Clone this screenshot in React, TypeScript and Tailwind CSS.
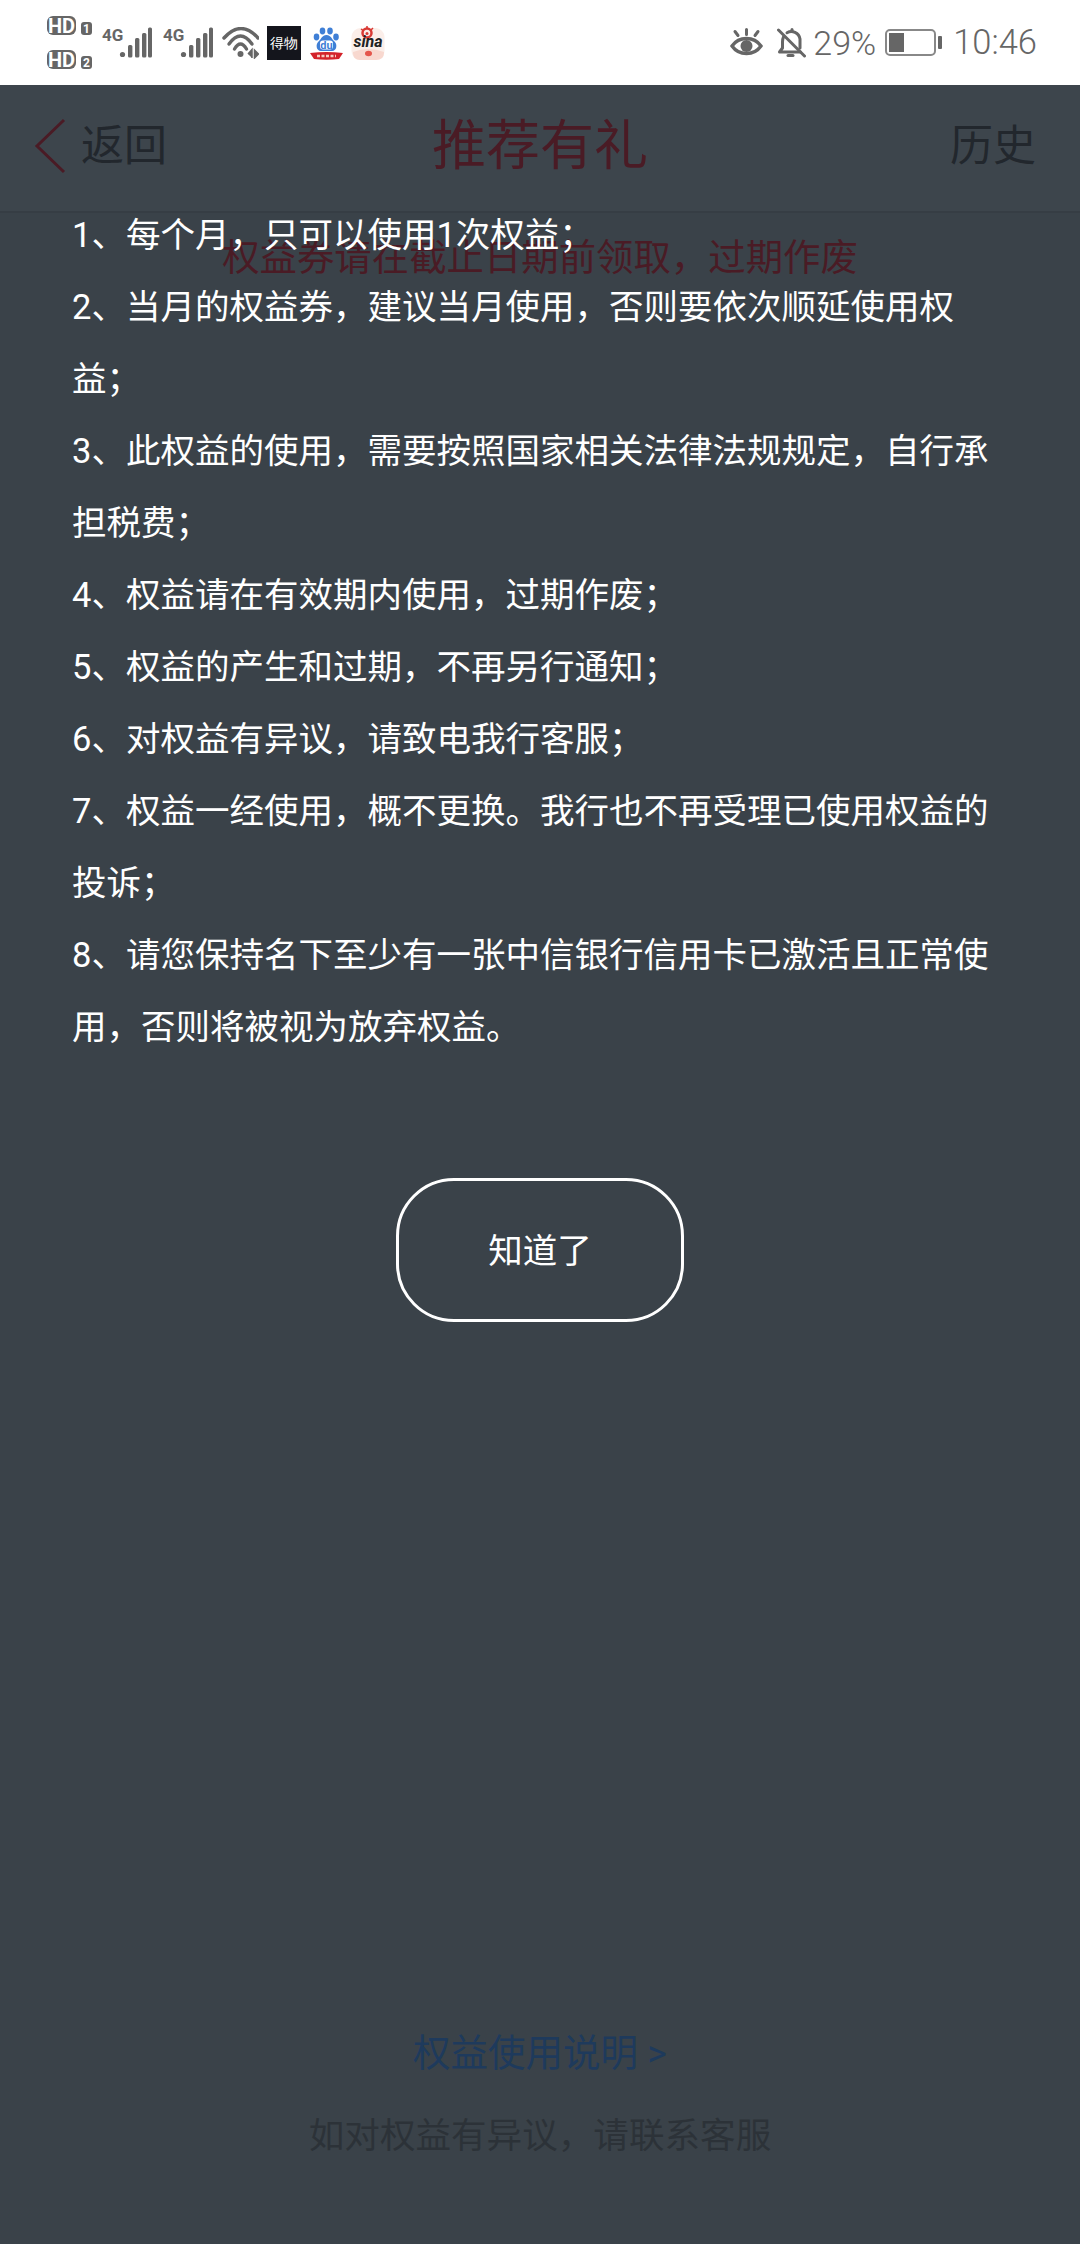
const cjk = "font-['Roboto','Noto_Sans_CJK_SC',sans-serif]";
const narrow = "font-['Liberation_Sans_Narrow','Roboto',sans-serif]";

const rules = [
  "1、每个月，只可以使用1次权益；",
  "2、当月的权益券，建议当月使用，否则要依次顺延使用权益；",
  "3、此权益的使用，需要按照国家相关法律法规规定，自行承担税费；",
  "4、权益请在有效期内使用，过期作废；",
  "5、权益的产生和过期，不再另行通知；",
  "6、对权益有异议，请致电我行客服；",
  "7、权益一经使用，概不更换。我行也不再受理已使用权益的投诉；",
  "8、请您保持名下至少有一张中信银行信用卡已激活且正常使用，否则将被视为放弃权益。",
];

function HdBadge({ n }: { n: number }) {
  return (
    <div className={`flex items-end gap-[5px] ${narrow}`}>
      <span className="flex h-[19px] w-[29px] items-center justify-center rounded-[6px] bg-[#666] text-[20px] leading-none font-bold text-white">
        HD
      </span>
      <span className="flex h-[13px] w-[11px] items-center justify-center rounded-[3px] bg-[#666] text-[12px] leading-none font-bold text-white">
        {n}
      </span>
    </div>
  );
}

function Signal() {
  return (
    <div className="relative h-[32px] w-[50px]">
      <span className={`absolute -top-[1px] left-0 text-[17px] leading-[18px] font-bold text-[#666] ${narrow}`}>4G</span>
      <svg className="absolute top-0 left-0" width="50" height="32" viewBox="0 0 50 32" fill="#666">
        <circle cx="20.500" cy="27.500" r="2.600" />
        <rect x="26" y="18" width="4.400" height="12.500" rx="1.500" />
        <rect x="33" y="11" width="4.400" height="19.500" rx="1.500" />
        <rect x="40" y="6" width="4.400" height="24.500" rx="1.500" />
        <rect x="46" y="0.500" width="4" height="30" rx="1.500" />
      </svg>
    </div>
  );
}

function Wifi() {
  return (
    <svg width="37" height="32" viewBox="0 0 37 32" fill="none" stroke="#666" strokeWidth="3.400" strokeLinecap="round">
      <path d="M2 11Q19 -8 36 11" />
      <path d="M7 17Q18.500 1 30 17" />
      <path d="M12.500 22Q18.500 12 24.500 22" />
      <circle cx="18.500" cy="27" r="3" fill="#666" stroke="none" />
      <path d="M26 27l4-4.500V31M32.500 23V31L36.500 27Z" fill="#666" strokeWidth="1.500" strokeLinecap="butt" />
    </svg>
  );
}

function Dewu() {
  return (
    <div className="flex h-[34px] w-[34px] items-center justify-center bg-[#14151c] text-[14px] leading-none font-light whitespace-nowrap text-white">
      得物
    </div>
  );
}

function Baidu() {
  return (
    <svg width="34" height="34" viewBox="0 0 34 34">
      <g fill="#3f7fd6">
        <ellipse cx="7.500" cy="11" rx="2.800" ry="3.400" />
        <ellipse cx="13.500" cy="5" rx="2.800" ry="3.400" />
        <ellipse cx="21" cy="5" rx="2.800" ry="3.400" />
        <ellipse cx="27" cy="11" rx="2.800" ry="3.400" />
        <path d="M17.500 9C13 9 12.500 13 9.500 15.500 6.500 18 7 25 12 25h11c5 0 5.500-7 2.500-9.500C22.500 13 22 9 17.500 9Z" />
      </g>
      <rect x="11" y="14.500" width="13" height="9" rx="3" fill="#fff" />
      <text x="17.500" y="22.500" textAnchor="middle" fontSize="11" fontWeight="700" fill="#3f7fd6" fontFamily="Roboto">
        du
      </text>
      <path d="M1 27Q17.500 25 34 27L30 33Q17.500 34.500 5 33Z" fill="#d3222a" />
      <path d="M8 30H27" stroke="#f6c9c0" strokeWidth="2.500" strokeDasharray="3 1.500" />
    </svg>
  );
}

function Sina() {
  return (
    <svg width="34" height="34" viewBox="0 0 34 34">
      <rect x="0.500" y="2" width="33" height="32" rx="9" fill="#fbeee9" />
      <path d="M2 26Q17 20 33 26V27Q33 34 25 34H9Q2 34 2 27Z" fill="#f8d8cf" />
      <circle cx="16" cy="7" r="4.500" fill="none" stroke="#d93a35" strokeWidth="2.500" />
      <circle cx="16" cy="7.500" r="1.500" fill="#d93a35" />
      <path d="M10 3l3 2M22 2l-3 3M16 0v3" stroke="#d93a35" strokeWidth="1.500" />
      <text x="17" y="21" textAnchor="middle" fontSize="16" fontWeight="700" fontStyle="italic" fill="#222" fontFamily="Roboto">
        sina
      </text>
      <ellipse cx="17.500" cy="27.500" rx="3.500" ry="2.800" fill="#e4564c" />
    </svg>
  );
}

function Eye() {
  return (
    <svg width="33" height="29" viewBox="0 0 33 29" fill="none" stroke="#666" strokeWidth="3.400" strokeLinecap="round">
      <path d="M2 18C9 8 24 8 31 18 24 28 9 28 2 18Z" />
      <circle cx="16.500" cy="18" r="6" fill="#666" stroke="none" />
      <path d="M16.500 1.500v5M5 3.500l3 4M28 3.500l-3 4" strokeWidth="3" />
    </svg>
  );
}

function BellOff() {
  return (
    <svg width="29" height="30" viewBox="0 0 29 30" fill="none" stroke="#666" strokeWidth="3" strokeLinecap="round" strokeLinejoin="round">
      <path d="M6.500 9C5.500 11 5.500 12 5.500 14v6L2.500 24h21" />
      <path d="M10 4.800C15 2 22 4.500 23 11v9" />
      <path d="M15 3V1.500" />
      <path d="M11 27.500h5" />
      <path d="M1.500 2l26 26" />
    </svg>
  );
}

function Battery() {
  return (
    <div className="flex items-center gap-[2px]">
      <div className="h-[27px] w-[51px] rounded-[5px] border-2 border-[#888] p-[2px]">
        <div className="h-full w-[15px] bg-[#666]" />
      </div>
      <div className="h-[13px] w-[4px] rounded-[1px] bg-[#666]" />
    </div>
  );
}

function StatusBar() {
  return (
    <div className="flex h-[85px] shrink-0 items-center justify-between bg-white pr-[43px] pl-[47px] font-['Roboto',sans-serif]">
      <div className="flex items-center">
        <div className="flex w-[55px] flex-col gap-[15px]">
          <HdBadge n={1} />
          <HdBadge n={2} />
        </div>
        <div className="flex items-center gap-[11px]">
          <Signal />
          <Signal />
        </div>
        <div className="ml-[9px] flex items-center gap-[8px]">
          <Wifi />
          <Dewu />
          <Baidu />
          <Sina />
        </div>
      </div>
      <div className="flex items-center text-[#666]">
        <Eye />
        <div className="ml-[14px]">
          <BellOff />
        </div>
        <span className="ml-[7px] text-[34px] leading-none font-light">29%</span>
        <div className="ml-[9px]">
          <Battery />
        </div>
        <span className="ml-[11px] text-[34.500px] leading-none font-light">10:46</span>
      </div>
    </div>
  );
}

function Header() {
  return (
    <div className="flex h-[128px] shrink-0 items-center border-b-2 border-[#363d44] bg-[#3d454c] px-[34px] pb-[4px]">
      <div className="flex flex-1 items-center gap-[15px]">
        <svg width="32" height="56" viewBox="0 0 32 56" fill="none" stroke="#4a1b25" strokeWidth="3">
          <path d="M30 2L3 28l27 26" />
        </svg>
        <span className="text-[43px] text-[#22272d]">返回</span>
      </div>
      <h1 className="text-[54px] font-normal text-[#4a1b25]">推荐有礼</h1>
      <div className="flex flex-1 justify-end">
        <span className="mr-[10px] text-[43px] text-[#22272d]">历史</span>
      </div>
    </div>
  );
}

export default function App() {
  return (
    <div className={`relative flex h-[2244px] w-[1080px] flex-col overflow-hidden bg-[#3a4249] ${cjk}`}>
      <StatusBar />
      <Header />
      <p className="mt-[17px] text-center text-[37.400px] leading-[56px] text-[#4a1b25]">
        权益券请在截止日期前领取，过期作废
      </p>
      <div className="mt-auto flex flex-col items-center pb-[80px]">
        <p className="text-[37.500px] leading-[56px] text-[#1e3a5c]">权益使用说明 &gt;</p>
        <p className="mt-[27px] text-[35.600px] leading-[56px] text-[#2c3238]">如对权益有异议，请联系客服</p>
      </div>

      {/* dialog layer sits on top of the dimmed page */}
      <div className="absolute inset-x-0 top-[199px] flex flex-col items-center">
        <div className="w-full pr-[64px] pl-[72px] text-[34.500px] leading-[72px] text-white">
          {rules.map((r) => (
            <p key={r}>{r}</p>
          ))}
        </div>
        <button className="mt-[115px] h-[144px] w-[288px] rounded-[58px] border-[3px] border-white pt-[3px] text-[34.500px] text-white">
          知道了
        </button>
      </div>
    </div>
  );
}
